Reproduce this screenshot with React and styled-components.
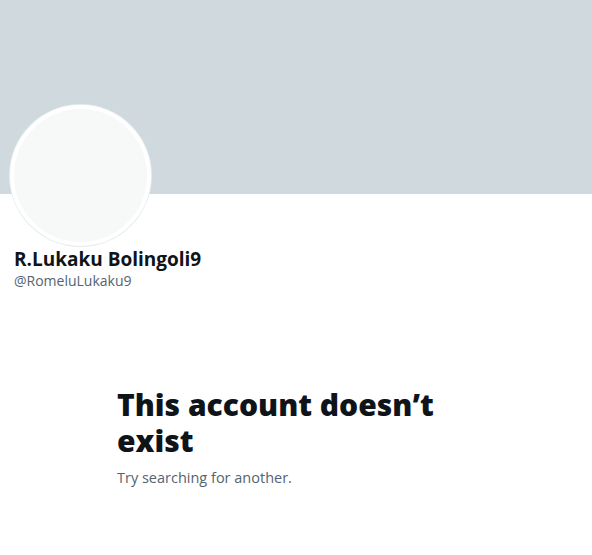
import styled, { createGlobalStyle } from "styled-components";

const GlobalStyle = createGlobalStyle`
  body {
    margin: 0;
    background: #ffffff;
    font-family: "Open Sans", "Noto Sans", sans-serif;
    color: #0f1419;
  }
`;

const Page = styled.div`
  width: 592px;
  min-height: 555px;
  background: #ffffff;
`;

const Banner = styled.div`
  height: 194px;
  background-color: #cfd9de;
`;

const ProfileInfo = styled.div`
  padding: 0 10px;
`;

const Avatar = styled.div`
  width: 133px;
  height: 133px;
  margin-top: -89px;
  border-radius: 50%;
  border: 4px solid #ffffff;
  background-color: #f7f9f9;
  box-shadow: 0 0 0 1px #e6ecef;
`;

const Name = styled.div`
  margin-top: 1px;
  padding-left: 4px;
  font-size: 19px;
  font-weight: 700;
  line-height: 24px;
  color: #0f1419;
`;

const Handle = styled.div`
  padding-left: 4px;
  font-size: 14px;
  line-height: 20px;
  color: #536471;
`;

const Empty = styled.div`
  padding: 96px 0 0 117px;
  max-width: 340px;
`;

const Title = styled.h1`
  margin: 0;
  font-size: 30px;
  font-weight: 800;
  line-height: 36px;
  color: #0f1419;
`;

const Subtitle = styled.p`
  margin: 9px 0 0;
  font-size: 14.5px;
  line-height: 20px;
  color: #536471;
`;

export default function App() {
  return (
    <Page>
      <GlobalStyle />
      <Banner />
      <ProfileInfo>
        <Avatar />
        <Name>R.Lukaku Bolingoli9</Name>
        <Handle>@RomeluLukaku9</Handle>
      </ProfileInfo>
      <Empty>
        <Title>This account doesn’t exist</Title>
        <Subtitle>Try searching for another.</Subtitle>
      </Empty>
    </Page>
  );
}
